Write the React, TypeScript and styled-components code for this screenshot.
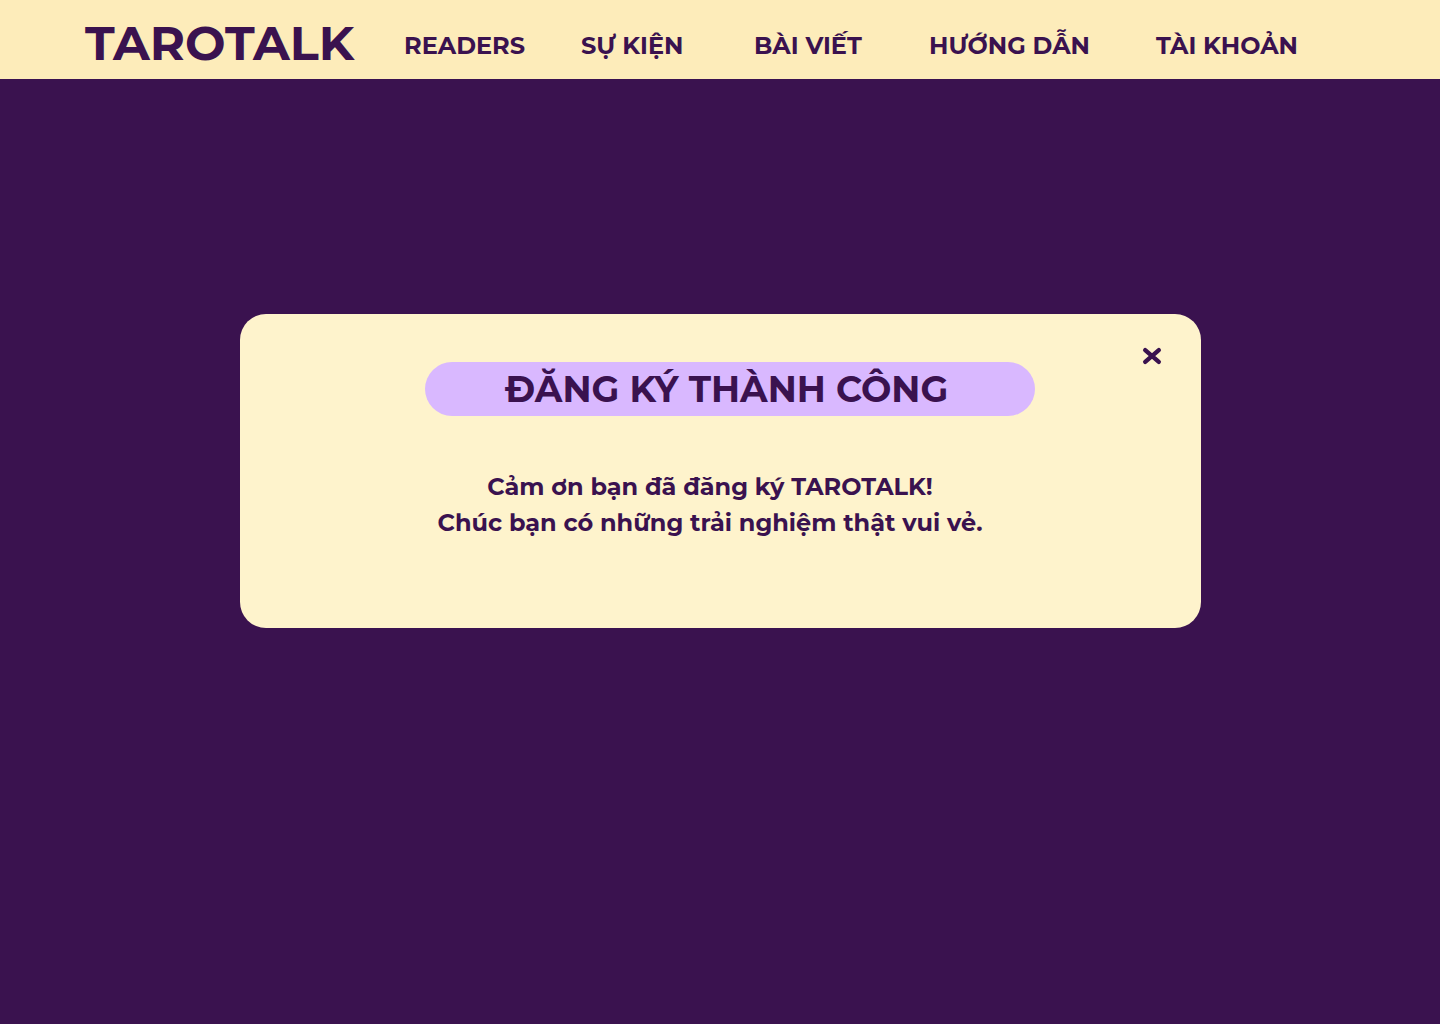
import React, { useState } from "react";
import styled, { createGlobalStyle } from "styled-components";

const colors = {
  plum: "#3a124f",
  butter: "#fdecba",
  cream: "#fef3cc",
  lilac: "#d9b8ff",
};

const GlobalStyle = createGlobalStyle`
  *, *::before, *::after { box-sizing: border-box; }
  body {
    margin: 0;
    background: ${colors.plum};
    color: ${colors.plum};
    font-family: Montserrat, Inter, "Open Sans", sans-serif;
    font-weight: 700;
  }
`;

const Page = styled.div`
  min-height: 100vh;
  display: flex;
  flex-direction: column;
`;

const Header = styled.header`
  display: grid;
  grid-template-columns: 319fr 1036fr;
  align-items: center;
  height: 79px;
  padding: 6px 0 0 85px;
  background: ${colors.butter};
`;

const Logo = styled.a`
  color: inherit;
  text-decoration: none;
  white-space: nowrap;
  font-size: 48px;
  line-height: 70px;
`;

const NavList = styled.ul`
  display: grid;
  grid-template-columns: 177fr 173fr 175fr 227fr 284fr;
  margin: 0;
  padding: 6px 0 0;
  list-style: none;
`;

const NavLink = styled.a`
  color: inherit;
  text-decoration: none;
  white-space: nowrap;
  font-size: 24px;
  line-height: 36px;
`;

const Main = styled.main`
  display: flex;
  justify-content: center;
  padding: 235px 24px 48px;
`;

const Dialog = styled.section`
  position: relative;
  display: flex;
  flex-direction: column;
  align-items: center;
  width: 100%;
  max-width: 961px;
  padding: 48px 40px 87px;
  border-radius: 26px;
  background: ${colors.cream};
`;

const Title = styled.h1`
  width: 100%;
  max-width: 610px;
  margin: 0 0 0 20px;
  padding: 0 80px;
  border-radius: 27px;
  background: ${colors.lilac};
  white-space: nowrap;
  font-size: 36px;
  line-height: 54px;
`;

const Message = styled.p`
  margin: 53px 20px 0 0;
  text-align: center;
  font-size: 24px;
  line-height: 36px;
`;

const CloseButton = styled.button`
  position: absolute;
  top: 30px;
  right: 37px;
  display: grid;
  place-items: center;
  width: 24px;
  height: 24px;
  padding: 0;
  border: 0;
  background: none;
  color: inherit;
  cursor: pointer;
`;

const links = [
  { href: "#readers", label: "READERS" },
  { href: "#su-kien", label: "SỰ KIỆN" },
  { href: "#bai-viet", label: "BÀI VIẾT" },
  { href: "#huong-dan", label: "HƯỚNG DẪN" },
  { href: "#tai-khoan", label: "TÀI KHOẢN" },
];

export default function App() {
  const [open, setOpen] = useState(true);
  return (
    <Page lang="vi">
      <GlobalStyle />
      <Header>
        <Logo href="#">TAROTALK</Logo>
        <nav>
          <NavList>
            {links.map((link) => (
              <li key={link.href}>
                <NavLink href={link.href}>{link.label}</NavLink>
              </li>
            ))}
          </NavList>
        </nav>
      </Header>
      <Main>
        {open && (
          <Dialog role="dialog" aria-labelledby="dialog-title">
            <CloseButton type="button" aria-label="Đóng" onClick={() => setOpen(false)}>
              <svg width="24" height="24" viewBox="0 0 24 24" fill="none" stroke="currentColor" strokeWidth="4.4" strokeLinecap="round" aria-hidden="true">
                <path d="M5.2 6.2l13.6 11.6M18.8 6.2L5.2 17.8" />
              </svg>
            </CloseButton>
            <Title id="dialog-title">ĐĂNG KÝ THÀNH CÔNG</Title>
            <Message>
              Cảm ơn bạn đã đăng ký TAROTALK!
              <br />
              Chúc bạn có những trải nghiệm thật vui vẻ.
            </Message>
          </Dialog>
        )}
      </Main>
    </Page>
  );
}
